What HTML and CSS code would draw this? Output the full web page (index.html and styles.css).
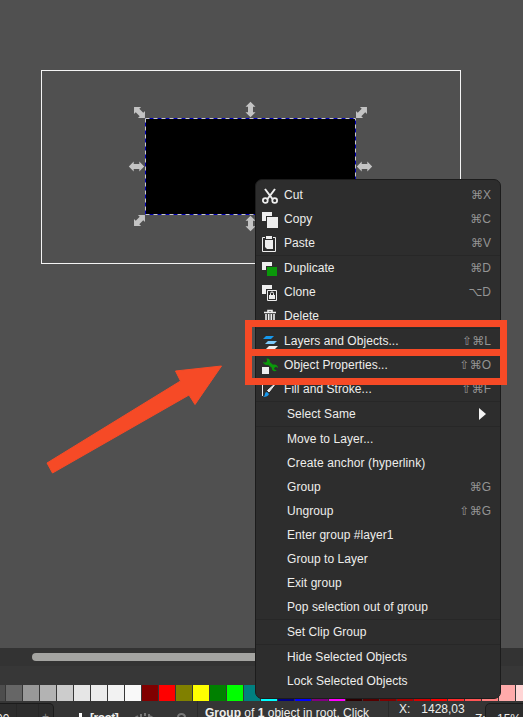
FILE: index.html
```html
<!DOCTYPE html>
<html lang="en">
<head>
<meta charset="utf-8">
<title>Object menu</title>
<link rel="stylesheet" href="styles.css">
</head>
<body>
<div class="app">
  <main class="canvas">
    <svg class="drawing" width="523" height="648" viewBox="0 0 523 648">
      <defs>
        <path id="handle" d="M-7.700 0L-2.800 -5V-2.500H2.800V-5L7.700 0L2.800 5V2.500H-2.800V5Z"/>
      </defs>
      <rect x="41.500" y="70.500" width="419" height="193" fill="none" stroke="#f4f4f4"/>
      <rect x="145.500" y="118.500" width="210" height="96" fill="#000" stroke="#0000b4"/>
      <rect x="145.500" y="118.500" width="210" height="96" fill="none" stroke="#c8c8c8" stroke-dasharray="4 4"/>
      <g fill="#c3c3c3">
        <use href="#handle" transform="translate(139.500 112.500) rotate(45)"/>
        <use href="#handle" transform="translate(250.500 109.500) rotate(90)"/>
        <use href="#handle" transform="translate(361.500 112.500) rotate(-45)"/>
        <use href="#handle" transform="translate(136.500 166.500)"/>
        <use href="#handle" transform="translate(364.500 166.500)"/>
        <use href="#handle" transform="translate(139.500 220.500) rotate(-45)"/>
        <use href="#handle" transform="translate(250.500 223.500) rotate(90)"/>
      </g>
      <path d="M47 463L180.500 381L175.500 371L221.500 366L195 404.500L189 395L52.500 473Z" fill="#f64a26" stroke="#f64a26" stroke-width="1" stroke-linejoin="round"/>
    </svg>
  </main>
  <div class="scroll"><div class="thumb"></div></div>
  <div class="palette">
    <i class="g1"></i><i class="g2"></i><i class="g3"></i><i class="g4"></i><i class="g5"></i><i class="g6"></i><i class="g7"></i><i class="g8"></i><i class="g9"></i><i class="maroon"></i><i class="red"></i><i class="olive"></i><i class="yellow"></i><i class="green"></i><i class="lime"></i><i class="teal"></i><i class="aqua"></i><i class="navy"></i><i class="blue"></i><i class="purple"></i><i class="fuchsia"></i><i class="r1"></i><i class="r2"></i><i class="r3"></i><i class="r4"></i><i class="r5"></i><i class="r6"></i><i class="r7"></i><i class="r8"></i><i class="r9"></i><i class="r10"></i><i class="r11"></i>
  </div>
  <footer class="status">
    <div class="spin"><span class="num">00</span><span class="minus"></span><span class="plus">+</span></div>
    <div class="layer"><i class="mark"></i><span class="root">[root]</span>
      <svg class="tools" width="54" height="6" viewBox="0 0 54 6"><path d="M0 5L3 3M6 4V1M10 3V0M14 4V1M18 5L15 3" stroke="#777" stroke-width="2"/><path d="M43 6V4a3.500 3 0 0 1 7 0V6" fill="none" stroke="#777" stroke-width="2"/></svg>
    </div>
    <div class="message"><b>Group</b> of <b>1</b> object in root. Click</div>
    <div class="coords"><span>X:</span><span class="xval">1428,03</span></div>
    <div class="zlabel">Z:</div>
    <div class="zoom">15%</div>
  </footer>

  <nav class="menu">
    <div class="row"><svg class="icon" viewBox="0 0 16 16"><g fill="none" stroke="#eee"><path d="M3 1L10.500 11M13 1L5.500 11" stroke-width="2"/><circle cx="3.300" cy="12.500" r="2.400" stroke-width="1.800"/><circle cx="12.700" cy="12.500" r="2.400" stroke-width="1.800"/></g></svg><span>Cut</span><kbd><i>⌘</i>X</kbd></div>
    <div class="row"><svg class="icon" viewBox="0 0 16 16"><path d="M0 0H10V4H4V9H0ZM5 5H16V16H5Z" fill="#eee"/></svg><span>Copy</span><kbd><i>⌘</i>C</kbd></div>
    <div class="row"><svg class="icon" viewBox="0 0 16 16"><path d="M3 1.500H.500V15.500H13.500V1.500H11" fill="none" stroke="#eee"/><path d="M4 0H10V3H4ZM3 4H11V13H5L3 11Z" fill="#eee"/></svg><span>Paste</span><kbd><i>⌘</i>V</kbd></div>
    <hr>
    <div class="row"><svg class="icon" viewBox="0 0 16 16"><path d="M0 1H10V5H4V9H0Z" fill="#eee"/><path d="M5 6H15V15H5Z" fill="#0a980a"/></svg><span>Duplicate</span><kbd><i>⌘</i>D</kbd></div>
    <div class="row"><svg class="icon" viewBox="0 0 16 16"><path d="M0 0H10V4H4V9H0Z" fill="#eee"/><path d="M5.500 5.500H14.500V15.500H5.500Z" fill="#2d2d2d" stroke="#eee"/><path d="M7 10H13V14H7Z" fill="#eee"/><path d="M8.500 10V8.500a1.500 1.500 0 0 1 3 0V10" fill="none" stroke="#eee"/></svg><span>Clone</span><kbd><i>⌥</i>D</kbd></div>
    <div class="row"><svg class="icon" viewBox="0 0 16 16"><path d="M2 3.500H14M6 3V1.500H10V3" fill="none" stroke="#eee" stroke-width="1.600"/><path d="M4 5V14H12V5M6.700 5V13M9.300 5V13" fill="none" stroke="#eee" stroke-width="1.600"/></svg><span>Delete</span></div>
    <hr>
    <div class="row"><svg class="icon" viewBox="0 0 16 16"><path d="M4 2H12L9 5H1Z" fill="#1698ed"/><path d="M6 7H15L12 10H3Z" fill="#7cc9fa"/><path d="M7 12H16L13 15H4Z" fill="#eee"/></svg><span>Layers and Objects...</span><kbd><i>⇧</i><i>⌘</i>L</kbd></div>
    <div class="row"><svg class="icon" viewBox="0 0 16 16"><path d="M4.500 0.500C7 0 8.500 2 7.800 4L11 6.800C13.500 6 16 7.500 16 10L13.800 8.800L12 10.200L12.500 11.500L14.800 12.500C12.500 14.200 9.500 12.500 9.800 9.800L6 6.700C4 7.500 1.300 6.300 1 3.500L3 4.700L5 3.500V2Z" fill="#0a980a"/><path d="M0 9H7V16H0Z" fill="#eee"/></svg><span>Object Properties...</span><kbd><i>⇧</i><i>⌘</i>O</kbd></div>
    <div class="row"><svg class="icon" viewBox="0 0 16 16"><path d="M.500 0V14" stroke="#eee"/><path d="M14 1L7 10L5.500 8.500Z" fill="#eee" stroke="#eee"/><path d="M5 10L7 12Q6 15 1 15Q3 14 3 12Q3 10 5 10Z" fill="#1698ed"/></svg><span>Fill and Stroke...</span><kbd><i>⇧</i><i>⌘</i>F</kbd></div>
    <hr>
    <div class="row plain"><span>Select Same</span><svg class="more" width="7" height="12" viewBox="0 0 7 12"><path d="M0 0L7 6L0 12Z" fill="#f4f4f4"/></svg></div>
    <hr>
    <div class="row plain"><span>Move to Layer...</span></div>
    <div class="row plain wide"><span>Create anchor (hyperlink)</span></div>
    <div class="row plain"><span>Group</span><kbd><i>⌘</i>G</kbd></div>
    <div class="row plain"><span>Ungroup</span><kbd><i>⇧</i><i>⌘</i>G</kbd></div>
    <div class="row plain"><span>Enter group #layer1</span></div>
    <div class="row plain"><span>Group to Layer</span></div>
    <div class="row plain"><span>Exit group</span></div>
    <div class="row plain"><span>Pop selection out of group</span></div>
    <hr>
    <div class="row plain"><span>Set Clip Group</span></div>
    <hr>
    <div class="row plain"><span>Hide Selected Objects</span></div>
    <div class="row plain"><span>Lock Selected Objects</span></div>
  </nav>
  <div class="marker"><div class="divider"></div></div>
</div>
</body>
</html>
```

FILE: styles.css
```css
* { box-sizing: border-box; }
body { margin: 0; background: #505050; font-family: "Liberation Sans", sans-serif; font-size: 12px; color: #eeeeec; }
.app { position: relative; width: 523px; height: 717px; overflow: hidden; display: flex; flex-direction: column; }
.canvas { height: 648px; flex: none; background: #505050; }
.drawing { display: block; }

.scroll { height: 18px; flex: none; background: #333; padding: 5px 0 5px 32px; }
.thumb { height: 8px; width: 330px; background: #a4a4a1; border-radius: 4px; }

.palette { height: 35px; flex: none; background: #373737; padding-top: 19px; display: flex; gap: 1px; overflow: hidden; }
.palette i { width: 16px; height: 16px; flex: none; }
.palette .g1 { width: 5px; background: #4d4d4d; }
.g2 { background: #666; } .g3 { background: #999; } .g4 { background: #b3b3b3; }
.g5 { background: #ccc; } .g6 { background: #e6e6e6; } .g7 { background: #ececec; }
.g8 { background: #f2f2f2; } .g9 { background: #f9f9f9; }
.maroon { background: #800000; } .red { background: #f00; } .olive { background: #808000; }
.yellow { background: #ff0; } .green { background: #008000; } .lime { background: #0f0; }
.teal { background: #008080; } .aqua { background: #0ff; } .navy { background: #000080; }
.blue { background: #00f; } .purple { background: #800080; } .fuchsia { background: #f0f; }
.r1 { background: #2b0000; } .r2 { background: #500; } .r3 { background: #800000; }
.r4 { background: #a00; } .r5 { background: #d40000; } .r6 { background: #f00; }
.r7 { background: #ff2a2a; } .r8 { background: #f55; } .r9 { background: #ff8080; }
.r10 { background: #faa; } .r11 { background: #ffd5d5; }

.status { height: 16px; flex: none; background: #353535; display: flex; align-items: flex-start; overflow: hidden; white-space: nowrap; }
.spin { width: 54px; height: 30px; margin-top: 2px; flex: none; background: #2d2d2d; border: 1px solid #1b1b1b; border-left: 0; border-radius: 0 5px 0 0; display: flex; padding-top: 8px; }
.num { width: 20px; margin-left: -4px; }
.minus { width: 23px; border: solid #272727; border-width: 0 1px; margin-top: -8px; }
.plus { margin-left: 3px; margin-top: -2px; color: #888; }
.layer { width: 143px; height: 16px; flex: none; padding-top: 12px; display: flex; }
.mark { width: 3px; height: 8px; margin-left: 25px; background: #fff; }
.root { margin-left: 8px; margin-top: -2px; font-weight: bold; width: 45px; letter-spacing: -.5px; }
.tools { flex: none; }
.message { width: 192px; height: 16px; flex: none; border-left: 1px solid #2a2a2a; border-right: 1px solid #2a2a2a; padding: 5px 0 0 7px; line-height: 14px; letter-spacing: 0; }
.coords { width: 86px; flex: none; padding: 1px 0 0 10px; line-height: 14px; display: flex; letter-spacing: 0; }
.xval { margin-left: 11px; }
.zlabel { width: 10px; padding-top: 11px; flex: none; }
.zoom { width: 60px; height: 30px; flex: none; margin-top: 2px; border: 1px solid #1b1b1b; border-radius: 5px; background: #2d2d2d; padding: 8px 0 0 11px; }

.menu { position: absolute; left: 255px; top: 179px; width: 246px; height: 520px; background: #2d2d2d; border: 1px solid #1c1c1c; border-radius: 7px; padding-top: 3px; }
.menu hr { height: 1px; border: 0; margin: 0; background: #272727; }
.row { height: 24px; display: flex; align-items: center; padding: 0 9px 0 6px; line-height: 24px; white-space: nowrap; letter-spacing: .06px; }
.row.plain { padding-left: 31px; }
.row.wide { letter-spacing: .12px; }
.icon { width: 16px; height: 16px; margin-right: 6px; position: relative; top: 1px; }
.row kbd { margin-left: auto; font: inherit; color: #949494; letter-spacing: 0; display: flex; }
.row kbd i { font-family: "DejaVu Sans", sans-serif; font-style: normal; font-size: 12px; }
.more { margin: 0 5px 0 auto; }

.marker { position: absolute; left: 245px; top: 320px; width: 262px; height: 65px; border: 7px solid #f64a26; }
.divider { margin-top: 22px; height: 7px; background: #f64a26; }
```
